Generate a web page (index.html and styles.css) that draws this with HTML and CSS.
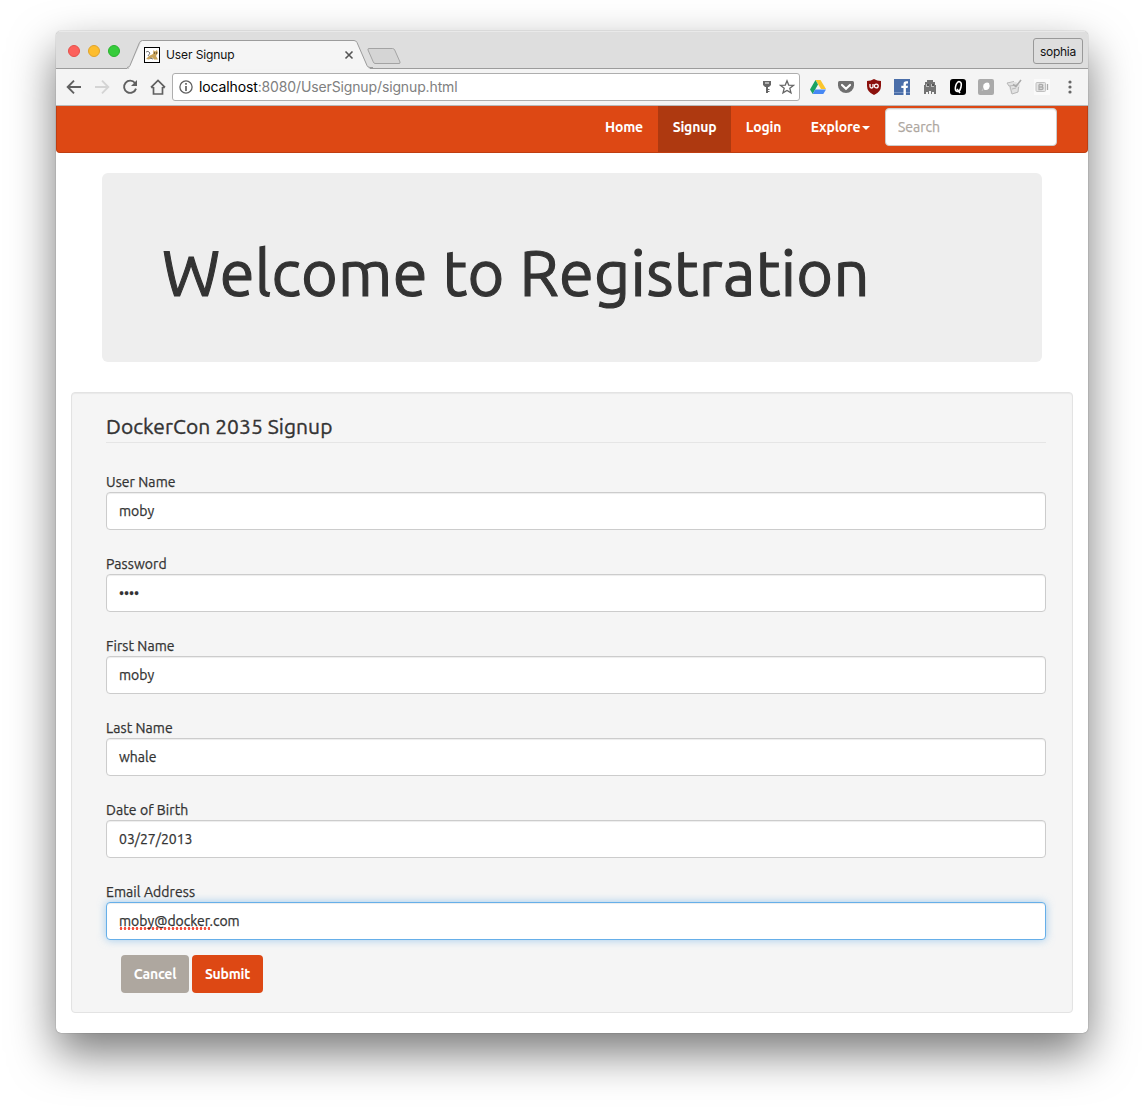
FILE: index.html
```html
<!DOCTYPE html>
<html lang="en">
<head>
<meta charset="utf-8">
<title>User Signup</title>
<link rel="stylesheet" href="styles.css">
</head>
<body>
<div class="window">
  <div class="tabstrip">
    <div class="lights"><i class="light close"></i><i class="light minimize"></i><i class="light maximize"></i></div>
    <div class="tab">
      <svg class="tab-shape" width="246" height="29" viewBox="0 0 246 29"><path d="M0 28.500H2L14 2.500Q15 .5 17 .5H227Q229 .5 230 2.500L240 26.500Q241 28.500 243 28.500V29H0Z" fill="#f5f5f5"/><path d="M0 27.500Q2 27.500 3 25.500L12.500 2.500Q13.500 .5 15.500 .5H227Q229 .5 230 2.500L240 25.500Q241 27.500 243 27.500H246" fill="none" stroke="#9c9c9c"/></svg>
      <svg class="favicon" width="16" height="16" viewBox="0 0 16 16"><rect x=".5" y=".5" width="15" height="15" fill="#fff" stroke="#000"/><path d="M2 12L5 9 9 7 9.500 3 11 4.500 13 3 14 6 12 9 14 12.500H10L8.500 10.500 5 12.500Z" fill="#c9a35a"/><path d="M2 5Q4 3 6 6L4 9M6 11L9 12" fill="none" stroke="#777"/><path d="M10 6h1M12 6h1" stroke="#222"/></svg>
      <span class="tab-title">User Signup</span>
      <svg class="tab-close" width="10" height="10" viewBox="0 0 10 10"><path d="M1.500 1.500L8.500 8.500M8.500 1.500L1.500 8.500" stroke="#555" stroke-width="1.600"/></svg>
    </div>
    <svg class="newtab" width="34" height="17" viewBox="0 0 34 17"><path d="M2 .5H25.500Q27 .5 27.700 2L33 14Q33.500 15.500 32 15.500H8Q7 15.500 6.300 14L1 2Q.5 .5 2 .5Z" fill="#d5d5d5" stroke="#a3a3a3"/></svg>
    <div class="profile">sophia</div>
  </div>
  <div class="toolbar">
    <svg width="16" height="16" viewBox="0 0 16 16"><path d="M15 8H2M8 1.700L1.700 8 8 14.300" fill="none" stroke="#606060" stroke-width="1.900"/></svg>
    <svg width="16" height="16" viewBox="0 0 16 16"><path d="M1 8H14M8 1.700L14.300 8 8 14.300" fill="none" stroke="#d4d4d4" stroke-width="1.900"/></svg>
    <svg width="16" height="16" viewBox="0 0 16 16"><path d="M13 4A6.100 6.100 0 1 0 14 9.600" fill="none" stroke="#606060" stroke-width="1.900"/><path d="M15 1V7H9Z" fill="#606060"/></svg>
    <svg width="16" height="16" viewBox="0 0 16 16"><path d="M3.500 8V15H12.500V8M1.200 8.500H3.500M12.500 8.500H14.800M1 8.400L8 1.500 15 8.400" fill="none" stroke="#606060" stroke-width="1.700"/></svg>
    <div class="omnibox">
      <svg width="14" height="14" viewBox="0 0 14 14"><circle cx="7" cy="7" r="6.100" fill="none" stroke="#606060" stroke-width="1.300"/><path d="M7 3V4.700M7 6V11" stroke="#606060" stroke-width="1.700"/></svg>
      <span class="url"><b>localhost</b>:8080/UserSignup/signup.html</span>
      <svg class="key" width="10" height="14" viewBox="0 0 10 14"><path d="M1 1H9V5L7 7H6V13H4V7H3L1 5Z" fill="#666"/><path d="M3 3H7" stroke="#fff"/><path d="M6 9.500H7.500M6 11.500H7.500" stroke="#666"/></svg>
      <svg width="16" height="16" viewBox="0 0 16 16"><path d="M8 1.800L9.700 6.100 14.400 6.400 10.800 9.300 12 13.900 8 11.400 4 13.900 5.200 9.300 1.600 6.400 6.300 6.100Z" fill="none" stroke="#666" stroke-width="1.300"/></svg>
    </div>
    <svg width="16" height="16" viewBox="0 0 16 16"><path d="M5.500 1H10.500L16 10H11Z" fill="#fbc62c"/><path d="M5.500 1L8 5.500 2.700 15 0 10.500Z" fill="#1ba260"/><path d="M5.200 10.500H16L13.300 15H2.700Z" fill="#4688f4"/></svg>
    <svg width="16" height="16" viewBox="0 0 16 16"><path d="M1.500 2H14.500Q16 2 16 3.500V6.500A8 7.500 0 0 1 0 6.500V3.500Q0 2 1.500 2Z" fill="#707070"/><path d="M4 6L8 9.700 12 6" fill="none" stroke="#fff" stroke-width="2.200" stroke-linecap="round"/></svg>
    <svg width="16" height="16" viewBox="0 0 16 16"><path d="M8 0Q11 2 15 2V7Q15 13 8 16 1 13 1 7V2Q5 2 8 0Z" fill="#8b100c"/><path d="M4 5V7.500Q4 9 5.500 9T7 7.500V5" fill="none" stroke="#fff" stroke-width="1.300"/><circle cx="10.300" cy="7" r="1.900" fill="none" stroke="#fff" stroke-width="1.300"/></svg>
    <svg width="16" height="16" viewBox="0 0 16 16"><path d="M0 0H16V16H0Z" fill="#4a6ea9"/><path d="M0 13.500H16" stroke="#7894c3"/><path d="M9.500 16V9H7.300V6.700H9.500V5Q9.500 2.300 12.200 2.300H14V4.600H13Q11.900 4.600 11.900 5.800V6.700H14L13.600 9H11.900V16Z" fill="#fff"/></svg>
    <svg width="16" height="16" viewBox="0 0 16 16"><path d="M2 15V6H3V3H5V1H11V3H13V6H14V15H12V13H10V15H9V12H7V15H6V13H4V15Z" fill="#737373"/><path d="M4 5H7V8H4ZM9 5H12V8H9Z" fill="#bbb"/><path d="M5 5H7V7H5ZM10 5H12V7H10Z" fill="#555"/></svg>
    <svg width="16" height="16" viewBox="0 0 16 16"><rect width="16" height="16" rx="3" fill="#000"/><ellipse cx="8.200" cy="7.500" rx="2.700" ry="5" transform="rotate(14 8 8)" fill="none" stroke="#fff" stroke-width="1.600"/><path d="M7 10L10 14" stroke="#fff" stroke-width="1.500"/></svg>
    <svg width="16" height="16" viewBox="0 0 16 16"><rect width="16" height="16" rx="2" fill="#aaa"/><path d="M5.500 5.500Q8 2.500 11 4 12.500 7 11 9.500 8.500 12 6 10.500 4.500 8 5.500 5.500Z" fill="#fff"/><path d="M5.500 9L4 12" stroke="#c8c8c8"/></svg>
    <svg width="16" height="16" viewBox="0 0 16 16"><path d="M1 4L10 3 14 6 12 14 5 15 3 8Z" fill="#e2e2e2"/><path d="M1 4L8 2.500M1 4L3 7 11 6M4 7L6 15 12 13 12.500 8M6 10L10 9" fill="none" stroke="#b8b8b8"/><path d="M15 1L10 7.500 7 5.500" fill="none" stroke="#aaa" stroke-width="1.600"/></svg>
    <svg width="16" height="16" viewBox="0 0 16 16"><path d="M0 0H16V16H0Z" fill="#fafafa"/><rect x="2" y="3.500" width="9.500" height="9" rx="1" fill="#e4e4e4" stroke="#c0c0c0"/><path d="M5 5.500V10.500H7.300Q9 10.500 9 9.200T7.500 8Q8.700 7.900 8.700 6.700T7.300 5.500H5M5 8H7.500M13.500 5V11" fill="none" stroke="#aaa" stroke-width="1.300"/></svg>
    <svg width="16" height="16" viewBox="0 0 16 16"><circle cx="8" cy="3" r="1.600" fill="#666"/><circle cx="8" cy="8" r="1.600" fill="#666"/><circle cx="8" cy="13" r="1.600" fill="#666"/></svg>
  </div>
  <div class="page">
    <nav class="navbar">
      <a class="nav-link home">Home</a>
      <a class="nav-link signup">Signup</a>
      <a class="nav-link login">Login</a>
      <a class="nav-link explore">Explore<i class="caret"></i></a>
      <div class="search">Search</div>
    </nav>
    <header class="jumbotron"><h1>Welcome to Registration</h1></header>
    <form class="well">
      <h2>DockerCon 2035 Signup</h2>
      <div class="field"><label>User Name</label><div class="control">moby</div></div>
      <div class="field"><label>Password</label><div class="control">••••</div></div>
      <div class="field"><label>First Name</label><div class="control">moby</div></div>
      <div class="field"><label>Last Name</label><div class="control">whale</div></div>
      <div class="field"><label>Date of Birth</label><div class="control">03/27/2013</div></div>
      <div class="field"><label>Email Address</label><div class="control focused"><span class="misspelled">moby@docker</span>.com</div></div>
      <div class="actions"><button type="button" class="btn cancel">Cancel</button><button type="button" class="btn submit">Submit</button></div>
    </form>
  </div>
</div>
</body>
</html>
```
FILE: styles.css
```css
* { box-sizing: border-box; }
body { margin: 0; padding: 31px 56px 80px; height: 1113px; overflow: hidden; background: #fff; font-family: Ubuntu, "Noto Sans", sans-serif; font-size: 14px; color: #333; }
svg { display: block; flex: none; }
.window { width: 1032px; height: 1002px; border-radius: 5px; background: #fff; box-shadow: 0 0 1px rgba(0,0,0,.6), 0 20px 45px rgba(0,0,0,.53); overflow: hidden; }

.tabstrip { height: 38px; display: flex; align-items: flex-start; background: #dedede; border-bottom: 1px solid #9c9c9c; font-family: Inter, sans-serif; font-size: 12px; color: #111; box-shadow: inset 0 1px #e9e9e9; }
.lights { display: flex; gap: 8px; padding: 14px 0 0 12px; width: 71px; }
.light { width: 12px; height: 12px; flex: none; border-radius: 50%; }
.close { background: #fc615c; border: 1px solid #e5504a; }
.minimize { background: #fdbd2e; border: 1px solid #e0a32b; }
.maximize { background: #36cc3b; border: 1px solid #29b22e; }
.tab { position: relative; width: 246px; height: 29px; margin-top: 9px; padding: 0 19px 0 17px; display: flex; align-items: center; }
.tab-shape { position: absolute; left: 0; top: 0; }
.favicon, .tab-title, .tab-close { position: relative; }
.tab-title { margin-left: 6px; flex: 1; letter-spacing: -.1px; }
.newtab { margin: 17px 0 0 -6px; }
.profile { margin: 7px 5px 0 auto; width: 50px; height: 26px; border: 1px solid #999; border-radius: 3px; line-height: 25px; text-align: center; letter-spacing: -.3px; }

.toolbar { height: 37px; padding: 0 10px; display: flex; align-items: center; gap: 12px; background: #f4f4f4; border-bottom: 1px solid #b9b9b9; }
.omnibox { width: 628px; height: 28px; margin: 0 -2px 0 -6px; padding: 0 4px 0 6px; display: flex; align-items: center; border: 1px solid #aeaeae; border-radius: 3px; background: #fff; }
.url { flex: 1; margin-left: 6px; font: 14px/26px Inter, sans-serif; color: #808080; letter-spacing: -.13px; }
.url b { font-weight: 400; color: #000; }
.key { margin-right: 7px; }

.page { -webkit-text-stroke: .25px; }
.navbar { height: 47px; display: flex; justify-content: flex-end; padding-right: 31px; background: #dd4814; border: 1px solid #bf3e11; border-top: 0; border-radius: 0 0 4px 4px; }
.nav-link { height: 46px; line-height: 43px; text-align: center; color: #fff; font-weight: 600; letter-spacing: -.2px; -webkit-text-stroke: 0; }
.home { width: 68px; }
.signup { width: 73px; background: #ae3910; }
.login { width: 65px; }
.explore { width: 89px; }
.caret { display: inline-block; margin-left: 2px; vertical-align: middle; border: 4px solid transparent; border-top-color: #fff; border-bottom: 0; }
.search { width: 172px; height: 38px; margin-top: 2px; margin-right: -1px; padding-left: 12px; line-height: 36px; background: #fff; border: 1px solid #ccc; border-radius: 4px; color: #aea79f; box-shadow: inset 0 1px 1px rgba(0,0,0,.075); }

.jumbotron { margin: 20px 46px 30px; height: 189px; padding-left: 60px; display: flex; align-items: center; background: #eee; border-radius: 6px; }
h1 { margin: 0; padding-top: 9px; font-size: 63px; line-height: 69px; font-weight: 400; white-space: nowrap; letter-spacing: .31px; -webkit-text-stroke: 1.1px; }

.well { margin: 0 15px; height: 621px; padding: 19px 26px 0 34px; background: #f5f5f5; border: 1px solid #e3e3e3; border-radius: 4px; box-shadow: inset 0 1px 1px rgba(0,0,0,.05); }
h2 { margin: 0 0 29px; height: 31px; border-bottom: 1px solid #e5e5e5; font-size: 21px; font-weight: 400; line-height: 29px; letter-spacing: .06px; -webkit-text-stroke: .35px; }
.field { height: 82px; }
label { display: block; line-height: 20px; letter-spacing: .08px; }
.control { height: 38px; padding: 0 12px; line-height: 36px; border: 1px solid #ccc; border-radius: 4px; background: #fff; box-shadow: inset 0 1px 1px rgba(0,0,0,.075); }
.focused { border-color: #66afe9; box-shadow: inset 0 1px 1px rgba(0,0,0,.075), 0 0 8px rgba(102,175,233,.6); }
.misspelled { padding-bottom: 1px; background: radial-gradient(circle, #f2513f 1.200px, transparent 1.600px) left bottom / 4px 3px repeat-x; }
.actions { display: flex; gap: 3px; margin: -9px 0 0 15px; }
.btn { height: 38px; padding: 0; border: 0; border-radius: 4px; color: #fff; font: 600 14px/38px Ubuntu, "Noto Sans", sans-serif; letter-spacing: -.22px; -webkit-text-stroke: 0; }
.cancel { width: 68px; background: #aea79f; }
.submit { width: 71px; background: #dd4814; }
```
